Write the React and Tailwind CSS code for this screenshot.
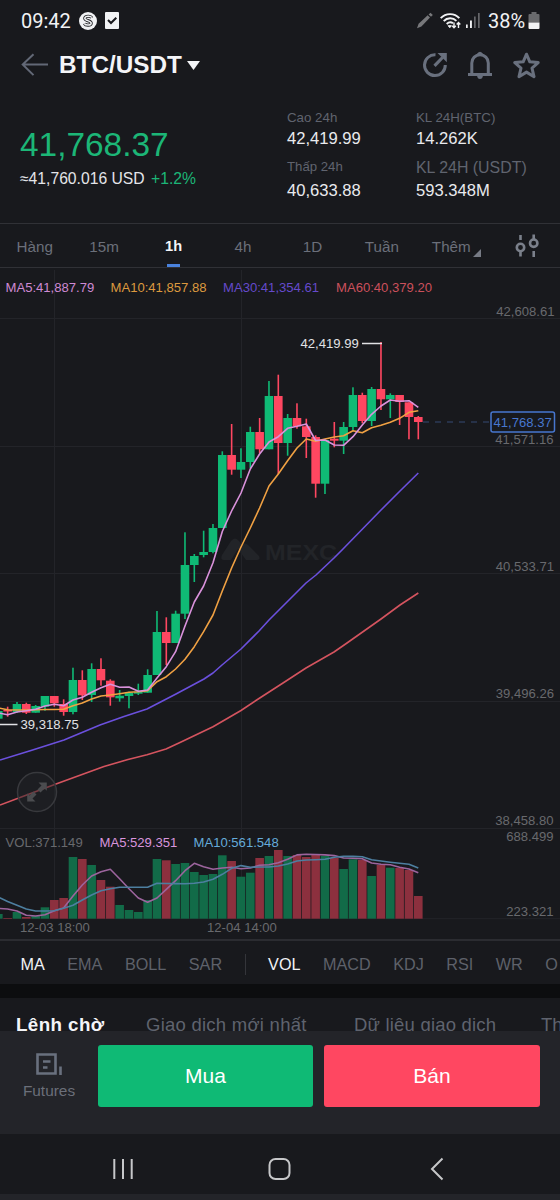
import React from "react";

const UP = "#0fba75";
const DOWN = "#ff4761";

const STEP = 9.333;
const LAST_X = 418.3;
const COUNT = 46;
const xAt = (i) => LAST_X - STEP * (COUNT - 1 - i);

// [direction, body top, body bottom, wick top, wick bottom, volume top]
const CANDLES = [
  [1, 711, 718.7, 711, 718.7, 914],
  [0, 710, 711.5, 706.7, 716.7, 918],
  [1, 704, 712, 702, 713, 912],
  [0, 704, 712.7, 702.7, 714, 917],
  [1, 706, 712.7, 705, 712.7, 916],
  [1, 696, 706.7, 696, 710.7, 907.3],
  [0, 696, 703.3, 696, 706.7, 900],
  [0, 704, 712, 699.3, 715.7, 898],
  [1, 680, 712, 667.7, 714.3, 857],
  [0, 680, 695.3, 670.3, 700, 859],
  [1, 669, 695, 663.3, 702, 865],
  [0, 669, 680.3, 658.3, 685.7, 880],
  [0, 680.7, 697.3, 679.3, 705.7, 886.7],
  [1, 695.7, 698.3, 690, 701.7, 905],
  [1, 692.7, 696, 691.7, 708.3, 910],
  [1, 691.7, 693.7, 683.7, 695, 912],
  [1, 675, 692.7, 669.3, 692.7, 900],
  [1, 632, 675, 611, 675, 859],
  [0, 632, 643, 617.3, 665, 860.3],
  [1, 613.7, 643, 610.7, 643, 864],
  [1, 565, 613.7, 532.3, 619, 863],
  [1, 556, 565, 554, 582, 872],
  [1, 552, 555, 530.7, 557.3, 875],
  [1, 528, 552, 524, 553.3, 874],
  [1, 455, 528, 451.3, 528, 855.3],
  [0, 455, 469.7, 424, 474.7, 861],
  [1, 462, 469.7, 448.3, 478, 876.7],
  [1, 432, 462, 426.7, 468, 872.7],
  [0, 432, 449.3, 418, 453, 858],
  [1, 396, 449.3, 381, 449.3, 856],
  [0, 396, 443, 374.7, 474, 850],
  [1, 418, 443, 414, 455.7, 856],
  [0, 418, 426.3, 403.3, 428.7, 855],
  [0, 426.3, 437, 418.7, 458, 857],
  [0, 437, 483.7, 435.3, 497.7, 855],
  [1, 440, 483.7, 440, 494, 856],
  [0, 438.7, 440.7, 422, 447.3, 858],
  [1, 427, 440.7, 422, 454, 869],
  [1, 395, 427, 387.3, 430, 859.3],
  [0, 395, 421, 392.7, 423.3, 860],
  [1, 389, 421, 387, 426, 876],
  [0, 389, 399.3, 342, 410, 865],
  [1, 395, 399.3, 393.3, 418, 867.7],
  [0, 395, 402, 395, 425, 868],
  [0, 402.3, 417, 402.3, 439.3, 870],
  [0, 417, 422, 416, 439.3, 896],
];

const MA5 = [
  713, 714.7, 712, 710.7, 709.3, 706, 704.3, 705.7, 700, 697.3, 692.3, 687.7, 684.3, 687.3, 687, 691.3,
  690, 678, 666.7, 651.7, 626, 602, 586, 562.7, 531.5, 511, 493, 469, 454, 442, 436.7, 428.3, 426.3, 424,
  440.5, 440, 445, 445.3, 436.7, 425, 414.3, 406, 400, 401.3, 400.7, 407.3,
];
const MA10 = [
  708, 709.7, 710, 710, 709.7, 709.5, 709.5, 709.3, 705.7, 703, 699, 696, 695, 693.7, 692.3, 691.7,
  690.7, 681.7, 676.7, 669, 659.3, 646.7, 631.7, 615, 591, 568, 547, 528, 508, 486, 474, 460.7, 448, 439,
  441.3, 439, 437, 435.7, 430.7, 432.7, 427.7, 425.3, 422.3, 418.3, 412.3, 410.7,
];
const VOL5 = [
  908.3, 909, 911, 915.3, 916, 914.7, 910.7, 908, 896, 885, 876, 871.7, 869.3, 878.7, 888.7, 898, 902.3,
  898, 889.3, 880.7, 870.7, 863.3, 866.7, 869.3, 868, 867.3, 868.7, 868, 865.3, 864.7, 862.7, 859.3,
  854.9, 854.3, 854.5, 854.9, 855.6, 858, 858.3, 858.7, 863, 864.2, 864.7, 867.3, 869, 872.7,
];
const VOL10 = [
  897, 901.5, 905.3, 909, 911, 911, 910.7, 908.3, 905.3, 900, 895, 890.7, 888.7, 887.3, 887.3, 887.3,
  887.3, 883.3, 883.5, 883.6, 883.7, 883.2, 882, 879.3, 874.3, 868.3, 865.6, 867.3, 867, 867, 866, 864,
  861, 860, 859.7, 859.2, 857.3, 856.3, 856.4, 856.7, 859.7, 861, 862.2, 863.3, 864.3, 868,
];
const MA30 = [
  [0, 760], [31, 750.5], [64, 740], [100, 725], [124, 716.5], [147, 709], [176, 694], [204, 679], [213, 673],
  [222, 665], [241, 649], [259, 631], [269, 620], [287, 602], [306, 583], [316, 575], [334, 558], [343, 549],
  [381, 510], [400, 491], [418.3, 473],
];
const MA60 = [
  [0, 805], [28, 794.5], [56, 784], [104, 766.5], [128, 759.5], [147, 754.7], [166, 749], [180, 742.5], [213, 726.7],
  [241, 710.5], [259, 698.5], [283, 683], [306, 668], [334, 652], [347, 643], [381, 619], [400, 605], [418.3, 593],
];

const series = (ys) => ys.map((y, i) => `${xAt(i).toFixed(1)},${y}`).join(" ");
const points = (ps) => ps.map((p) => p.join(",")).join(" ");

function StatusBar() {
  return (
    <div className="flex h-[41px] items-center pl-[21px] pr-[20px] font-['Roboto',sans-serif] text-[20px] text-[#f1f2f4]">
      <span className="w-[50px]">09:42</span>
      <svg className="ml-[8px]" width="18" height="18" viewBox="0 0 18 18">
        <circle cx="9" cy="9" r="9" fill="#f1f2f4" />
        <path d="M12.7 5.8C11.8 3.8 6.4 3.5 5.8 6.2c-.6 2.8 6.5 2 6.4 5-.1 2.4-5.6 2.5-6.8.2" fill="none" stroke="#222327" strokeWidth="3.2" />
        <path d="M12.9 5.7C11.8 3.8 6.4 3.5 5.8 6.2c-.6 2.8 6.5 2 6.4 5-.1 2.4-5.6 2.5-6.9.3" fill="none" stroke="#f1f2f4" strokeWidth="1.5" />
      </svg>
      <svg className="ml-[8px]" width="14" height="17" viewBox="0 0 14 17">
        <rect width="14" height="17" rx="1" fill="#f1f2f4" />
        <path d="M3 8l3 3 5.3-5.3" fill="none" stroke="#17181c" strokeWidth="2" />
      </svg>
      <div className="grow" />
      <svg width="17" height="17" viewBox="0 0 17 17" fill="#77787b">
        <path d="M0 16.3l1.600-4.600L10.700 3.300l2.300 2.300-8.600 8.800z" />
        <path d="M11.600 2.400l1.900-1.700 2.300 2.300-1.800 1.800z" />
      </svg>
      <svg className="ml-[6px]" width="22" height="18" viewBox="0 0 22 18" fill="none" stroke="#f1f2f4" strokeWidth="1.9">
        <path d="M0.7 6.2C5.7 0.7 14.5 0.7 19.3 6.2" />
        <path d="M3.7 9.2c3.5-3.8 9.3-3.8 12.7-.3" />
        <path d="M6.7 12c2-2 4.6-2 6.3-.7" />
        <path d="M8.2 13.7h3.2l-1.6 2z" fill="#f1f2f4" strokeWidth="1" />
        <path d="M14 10.5v5M12.2 13.7l1.8 2 1.8-2M18.5 16v-5M16.7 12.5l1.8-2 1.8 2" strokeWidth="1.4" />
      </svg>
      <svg className="ml-[3px]" width="16" height="17" viewBox="0 0 16 17">
        <rect x="1" y="12.5" width="1.7" height="3.5" fill="#f1f2f4" />
        <rect x="5" y="8.5" width="1.9" height="7.5" fill="#f1f2f4" />
        <rect x="9" y="4.5" width="1.7" height="11.5" fill="#65666a" />
        <rect x="13" y="1" width="1.7" height="15" fill="#65666a" />
      </svg>
      <span className="ml-[7px] w-[38px]">38%</span>
      <svg className="ml-[2px]" width="12" height="17" viewBox="0 0 12 17">
        <path d="M1.5 2H3.5V0h5v2h2q1 0 1 1v7.5H.5V3q0-1 1-1z" fill="#696a6d" />
        <path d="M.5 10.5h11V16q0 1-1 1h-9q-1 0-1-1z" fill="#f1f2f4" />
      </svg>
    </div>
  );
}

function TitleBar() {
  return (
    <div className="flex h-[48px] items-center pl-[21px] pr-[20px]">
      <svg width="27" height="24" viewBox="0 0 27 24" fill="none" stroke="#626876" strokeWidth="2">
        <path d="M27 11.5H2M12.5 1.2L1.7 11.5l10.8 10.6" />
      </svg>
      <span className="ml-[11px] w-[124px] whitespace-nowrap text-[24.3px] font-bold text-[#f4f5f8]">BTC/USDT</span>
      <svg className="ml-[4px]" width="13" height="9" viewBox="0 0 13 9">
        <path d="M0 0h13L6.5 9z" fill="#f4f5f8" />
      </svg>
      <div className="grow" />
      <svg width="26" height="26" viewBox="0 0 26 26" fill="none" stroke="#69707e" strokeWidth="3">
        <path d="M13.5 2.800A10.400 10.400 0 1 0 23.300 13" />
        <path d="M12.500 13.800l8-8.300" strokeWidth="3.200" />
        <path d="M15.500 1h9.300v9.300z" fill="#69707e" stroke="none" />
      </svg>
      <svg className="ml-[20px]" width="24" height="28" viewBox="0 0 24 28" fill="none" stroke="#69707e" strokeWidth="3">
        <path d="M3.800 23V12a8.250 8.250 0 0 1 16.500 0V23" />
        <path d="M0 23.500h24" />
        <path d="M8.500 3.500Q12-2 15.500 3.500z M9 24.500h6Q14.500 28 12 28T9 24.500z" fill="#69707e" stroke="none" />
      </svg>
      <svg className="ml-[21px]" width="27" height="27" viewBox="0 0 27 27" fill="none" stroke="#69707e" strokeWidth="3" strokeLinejoin="round">
        <path d="M13.5 2.2l3.3 7.6 8.400.8-6.200 5.5 2 8.600-7.500-4.600-7.500 4.600 2-8.600-6.200-5.5 8.400-.8z" />
      </svg>
    </div>
  );
}

function Stat({ top, topValue, bottom, bottomValue, wide }) {
  return (
    <div className="flex flex-col whitespace-nowrap pt-[17px] text-[#60646f]">
      <span className="h-[23px] text-[13.3px] leading-[23px]">{top}</span>
      <span className="h-[20px] text-[16.6px] leading-[20px] text-[#e9eaee]">{topValue}</span>
      <span className={wide ? "h-[35px] text-[15.9px] leading-[37px]" : "h-[35px] text-[13.2px] leading-[35px]"}>{bottom}</span>
      <span className="h-[14px] text-[16.6px] leading-[14px] text-[#e9eaee]">{bottomValue}</span>
    </div>
  );
}

function Summary() {
  return (
    <div className="flex h-[134px]">
      <div className="flex w-[287px] flex-col pl-[20px] pt-[36px]">
        <span className="text-[33.4px] leading-[40px] text-[#1cb677]">41,768.37</span>
        <div className="flex text-[15.7px] leading-[28px] text-[#e4e5e9]">
          <span className="w-[131px] whitespace-nowrap">≈41,760.016 USD</span>
          <span className="text-[#1cb677]">+1.2%</span>
        </div>
      </div>
      <div className="w-[129px]">
        <Stat top="Cao 24h" topValue="42,419.99" bottom="Thấp 24h" bottomValue="40,633.88" />
      </div>
      <Stat top="KL 24H(BTC)" topValue="14.262K" bottom="KL 24H (USDT)" bottomValue="593.348M" wide />
    </div>
  );
}

function Intervals() {
  const items = ["Hàng", "15m", "1h", "4h", "1D", "Tuần", "Thêm"];
  return (
    <div className="flex h-[45px] border-y border-[#303136] text-[15.2px] text-[#6b6f7a]">
      <div className="grid w-[486px] grid-cols-7">
        {items.map((t) => (
          <div key={t} className="relative flex items-center justify-center pt-[3px]">
            <span className={t === "1h" ? "text-[14.6px] font-bold text-[#f4f5f8]" : ""}>{t}</span>
            {t === "1h" && <div className="absolute bottom-0 left-[28px] h-[3px] w-[13px] bg-[#4a82dd]" />}
            {t === "Thêm" && (
              <svg className="absolute bottom-[10px] right-[5px]" width="8" height="8" viewBox="0 0 8 8">
                <path d="M8 0v8H0z" fill="#777b85" />
              </svg>
            )}
          </div>
        ))}
      </div>
      <svg className="ml-[29px] mt-[10px]" width="24" height="24" viewBox="0 0 24 24" fill="none" stroke="#7b808b" strokeWidth="2.6">
        <circle cx="5.5" cy="13.5" r="3.7" />
        <circle cx="18.7" cy="9.2" r="3.7" />
        <path d="M5.5 1v5M5.5 17v5.5M18.7 .5v5M18.7 17v6" />
      </svg>
    </div>
  );
}

function Chart() {
  return (
    <svg className="block" width="560" height="671" viewBox="0 268 560 671" fontFamily="'Liberation Sans', Arial, sans-serif" fontSize="13.1">
      <g stroke="#232429" strokeWidth="1">
        <path d="M54.5 270V919M241.5 270V919M0 318.5H560M0 446.5H560M0 573.5H560M0 701.5H560M0 828.5H560M0 918.7H560" />
      </g>
      <g fill="#222428">
        <path d="M222 555l9-14q4-5 8 0l3 4q3-3 6 0l11 11q2 4-3 4h-10l-8-11-7 11h-7q-4 0-2-5z" />
        <text x="265" y="559.5" fontSize="22.500" fontWeight="bold" textLength="72" lengthAdjust="spacingAndGlyphs">MEXC</text>
      </g>
      <g fill="#68696d">
        <text x="554.5" y="316" textAnchor="end">42,608.61</text>
        <text x="553.5" y="443.5" textAnchor="end">41,571.16</text>
        <text x="554" y="570.5" textAnchor="end">40,533.71</text>
        <text x="554" y="698" textAnchor="end">39,496.26</text>
        <text x="553.5" y="825" textAnchor="end">38,458.80</text>
        <text x="553.5" y="841" textAnchor="end">688.499</text>
        <text x="553.5" y="916" textAnchor="end">223.321</text>
        <text x="20" y="932">12-03 18:00</text>
        <text x="207" y="932">12-04 14:00</text>
        <text x="5.5" y="847">VOL:371.149</text>
      </g>
      {CANDLES.map(([up, top, bottom, high, low, vol], i) => (
        <g key={i} fill={up ? UP : DOWN}>
          <rect x={xAt(i) - 0.8} y={high} width="1.6" height={low - high} />
          <rect x={xAt(i) - 4.3} y={top} width="8.6" height={bottom - top} />
          <rect x={xAt(i) - 4.3} y={vol} width="8.6" height={918.7 - vol} fill={up ? "#126b48" : "#8c303e"} />
        </g>
      ))}
      <g fill="none" strokeWidth="1.6" strokeLinejoin="round">
        <polyline points={points(MA60)} stroke="#d4545f" />
        <polyline points={points(MA30)} stroke="#6b50dd" />
        <polyline points={series(MA10)} stroke="#f0a143" />
        <polyline points={series(MA5)} stroke="#da92dc" />
        <polyline points={series(VOL5)} stroke="#9c649d" />
        <polyline points={series(VOL10)} stroke="#4d7fa0" />
      </g>
      <text x="5.5" y="291.5" fill="#cf8ad4">MA5:41,887.79</text>
      <text x="110.5" y="291.5" fill="#dd993f">MA10:41,857.88</text>
      <text x="223" y="291.5" fill="#654acb">MA30:41,354.61</text>
      <text x="336" y="291.5" fill="#cb505c">MA60:40,379.20</text>
      <text x="99.5" y="847" fill="#d995dd">MA5:529.351</text>
      <text x="193.5" y="847" fill="#65abda">MA10:561.548</text>
      <g fill="#e1e2e5">
        <text x="300.5" y="348">42,419.99</text>
        <text x="20.5" y="729">39,318.75</text>
      </g>
      <path d="M362 343.5h20M0 724.5h17.5" stroke="#e1e2e5" strokeWidth="1.3" />
      <path d="M423 422H490" stroke="#354b75" strokeWidth="1.2" strokeDasharray="6 6" />
      <rect x="491" y="412" width="63.5" height="20" rx="2" fill="#17191e" stroke="#4777cf" strokeWidth="1.5" />
      <text x="493.5" y="427" fill="#4777cf">41,768.37</text>
      <circle cx="37" cy="792" r="19.5" fill="#222328" fillOpacity="0.5" stroke="#38393d" strokeWidth="1.5" />
      <g fill="#4b4c4f">
        <path d="M38.500 782.500h8.300v8.300l-2.300-2.300-4 4-3-3 4-4z" />
        <path d="M35.500 801.500h-8.300v-8.300l2.300 2.300 4-4 3 3-4 4z" />
      </g>
    </svg>
  );
}

function Indicators() {
  return (
    <div className="flex h-[45px] items-center gap-[22.5px] overflow-hidden whitespace-nowrap border-t-2 border-[#2b2c31] pl-[20.5px] pt-[3px] text-[16.2px] text-[#5e616a]">
      <span className="text-[#f1f2f5]">MA</span>
      <span>EMA</span>
      <span>BOLL</span>
      <span>SAR</span>
      <div className="h-[21px] w-px shrink-0 bg-[#34353a]" />
      <span className="text-[#f1f2f5]">VOL</span>
      <span>MACD</span>
      <span>KDJ</span>
      <span>RSI</span>
      <span>WR</span>
      <span>O</span>
    </div>
  );
}

function OrderTabs() {
  return (
    <div className="flex h-[33px] overflow-hidden whitespace-nowrap pl-[16px] text-[18.5px] leading-[53px] text-[#5f636e]">
      <span className="w-[130px] shrink-0 text-[18.8px] font-bold tracking-[0.400px] text-[#f4f5f8]">Lệnh chờ</span>
      <span className="w-[208px] shrink-0 tracking-[0.250px]">Giao dịch mới nhất</span>
      <span className="w-[187px] shrink-0 tracking-[0.200px]">Dữ liệu giao dịch</span>
      <span className="shrink-0">Th</span>
    </div>
  );
}

function TradeBar() {
  return (
    <div className="flex h-[103px] bg-[#232429] pr-[20px] pt-[13.5px]">
      <div className="flex w-[98px] flex-col items-center pt-[8px] text-[15.4px] leading-[20px] text-[#6b6f7a]">
        <svg width="26" height="22" viewBox="0 0 26 22" fill="none" stroke="#69707e" strokeWidth="2.6">
          <path d="M1.5 1.5h18v19h-18z" />
          <path d="M7 8.5h7.5M7 14.5h4.5M24.5 13.5v8.5" strokeWidth="2.6" />
        </svg>
        <span className="mt-[6px]">Futures</span>
      </div>
      <button className="h-[62.5px] w-[215px] rounded-[3px] bg-[#0fba75] text-[21px] text-white">Mua</button>
      <button className="ml-[11px] h-[62.5px] w-[216px] rounded-[3px] bg-[#ff4761] text-[21px] text-white">Bán</button>
    </div>
  );
}

function SystemNav() {
  return (
    <div className="h-[66px] border-b-[6px] border-[#232429] bg-[#18191d]">
      <svg className="block" width="560" height="60" viewBox="0 0 560 60" fill="none" stroke="#c6c7c9" strokeWidth="2">
        <path d="M114.3 25v20M123 25v20M131.7 25v20" />
        <rect x="269.5" y="25" width="20" height="20" rx="6" />
        <path d="M442.5 24.5L432 35l10.5 10.5" />
      </svg>
    </div>
  );
}

export default function App() {
  return (
    <div className="flex h-[1200px] w-[560px] flex-col overflow-hidden bg-[#18191d] font-['Liberation_Sans',Arial,sans-serif]">
      <StatusBar />
      <TitleBar />
      <Summary />
      <Intervals />
      <Chart />
      <Indicators />
      <div className="h-[14px] bg-[#0c0d0f]" />
      <OrderTabs />
      <TradeBar />
      <SystemNav />
    </div>
  );
}
